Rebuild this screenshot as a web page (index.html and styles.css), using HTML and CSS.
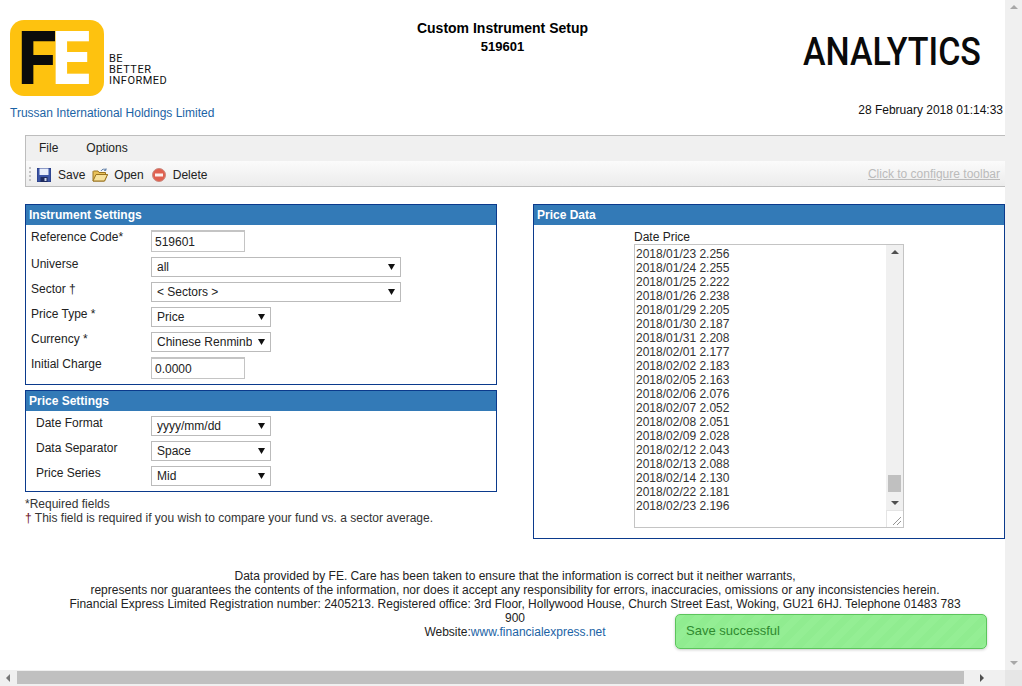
FILE: index.html
```html
<!DOCTYPE html>
<html lang="en">
<head>
<meta charset="utf-8">
<title>Custom Instrument Setup</title>
<link rel="stylesheet" href="styles.css">
</head>
<body>
<div class="window">
  <main class="page">
    <header class="header">
      <div class="brand">
        <div class="brand-row">
          <div class="logo"><span class="logo-f">F</span><span class="logo-e">E</span></div>
          <div class="tagline">BE<br>BETTER<br>INFORMED</div>
        </div>
        <a class="company">Trussan International Holdings Limited</a>
      </div>
      <div class="title">
        <h1>Custom Instrument Setup</h1>
        <h2>519601</h2>
      </div>
      <div class="right-head">
        <div class="analytics">ANALYTICS</div>
        <div class="date">28 February 2018 01:14:33</div>
      </div>
    </header>

    <section class="toolbox">
      <nav class="menu"><span>File</span><span>Options</span></nav>
      <div class="toolbar">
        <span class="grip"></span>
        <span class="tool">
          <svg class="icon" viewBox="0 0 14 14" width="14" height="14"><rect x="0" y="0" width="14" height="14" fill="#3b55a5"/><rect x="0" y="0" width="14" height="14" fill="none" stroke="#24377c"/><rect x="2.500" y="0.500" width="9" height="6.500" fill="#e8eefb"/><rect x="3.500" y="9" width="7" height="5" fill="#1d2a5e"/><rect x="7.500" y="10" width="2" height="3" fill="#cfd6e8"/></svg>
          Save</span>
        <span class="tool tool-open">
          <svg class="icon" viewBox="0 0 16 14" width="16" height="14"><path d="M1 3.500V13H12.500L15.500 6.500H13.500V4.500H7L6 3H1.500Z" fill="#e9c25a" stroke="#9a7420" stroke-width="1"/><path d="M1 13L4 6.500H15.500L12.500 13Z" fill="#f7e29c" stroke="#9a7420" stroke-width="1"/><path d="M9 3C10 1 12.500 .500 14 2M14 .300V2.300H12" fill="none" stroke="#5f7fa8" stroke-width="1"/></svg>
          Open</span>
        <span class="tool">
          <svg class="icon" viewBox="0 0 14 14" width="14" height="14"><circle cx="7" cy="7" r="6.500" fill="#e0604f" stroke="#c98a80"/><rect x="3" y="5.500" width="8" height="3" fill="#fdf0ee"/></svg>
          Delete</span>
        <a class="configure">Click to configure toolbar</a>
      </div>
    </section>

    <div class="columns">
      <div class="col">
        <section class="panel">
          <h3 class="panel-head">Instrument Settings</h3>
          <div class="panel-body">
            <div class="row"><label>Reference Code*</label><input class="input" value="519601"></div>
            <div class="row"><label>Universe</label><select class="select wide"><option>all</option></select></div>
            <div class="row"><label>Sector †</label><select class="select wide"><option>&lt; Sectors &gt;</option></select></div>
            <div class="row"><label>Price Type *</label><select class="select"><option>Price</option></select></div>
            <div class="row"><label>Currency *</label><select class="select"><option>Chinese Renminbi</option></select></div>
            <div class="row"><label>Initial Charge</label><input class="input" value="0.0000"></div>
          </div>
        </section>
        <section class="panel settings">
          <h3 class="panel-head">Price Settings</h3>
          <div class="panel-body indented">
            <div class="row"><label>Date Format</label><select class="select"><option>yyyy/mm/dd</option></select></div>
            <div class="row"><label>Data Separator</label><select class="select"><option>Space</option></select></div>
            <div class="row"><label>Price Series</label><select class="select"><option>Mid</option></select></div>
          </div>
        </section>
        <p class="notes">*Required fields<br><span class="dagger">†</span> This field is required if you wish to compare your fund vs. a sector average.</p>
      </div>
      <div class="col">
        <section class="panel">
          <h3 class="panel-head">Price Data</h3>
          <div class="data-body">
            <div class="data-label">Date Price</div>
            <div class="textarea">
              <div class="lines">2018/01/23 2.256<br>2018/01/24 2.255<br>2018/01/25 2.222<br>2018/01/26 2.238<br>2018/01/29 2.205<br>2018/01/30 2.187<br>2018/01/31 2.208<br>2018/02/01 2.177<br>2018/02/02 2.183<br>2018/02/05 2.163<br>2018/02/06 2.076<br>2018/02/07 2.052<br>2018/02/08 2.051<br>2018/02/09 2.028<br>2018/02/12 2.043<br>2018/02/13 2.088<br>2018/02/14 2.130<br>2018/02/22 2.181<br>2018/02/23 2.196</div>
              <div class="ta-side">
                <div class="ta-track">
                  <span class="arrow up dark"></span>
                  <span class="ta-thumb"></span>
                  <span class="arrow down dark"></span>
                </div>
                <div class="ta-grip"><svg viewBox="0 0 10 10" width="10" height="10"><path d="M1 9L9 1M5 9L9 5" stroke="#666" stroke-width="1" stroke-dasharray="1 .4" fill="none"/></svg></div>
              </div>
            </div>
          </div>
        </section>
      </div>
    </div>

    <footer class="footer">
      <div>Data provided by FE. Care has been taken to ensure that the information is correct but it neither warrants,</div>
      <div>represents nor guarantees the contents of the information, nor does it accept any responsibility for errors, inaccuracies, omissions or any inconsistencies herein.</div>
      <div>Financial Express Limited Registration number: 2405213. Registered office: 3rd Floor, Hollywood House, Church Street East, Woking, GU21 6HJ. Telephone 01483 783 900</div>
      <div>Website:<a class="link">www.financialexpress.net</a></div>
    </footer>

    <div class="toast">Save successful</div>
  </main>

  <aside class="vbar"><span class="arrow up faint"></span><span class="arrow down faint"></span></aside>
  <div class="hbar">
    <span class="arrow left"></span>
    <span class="hthumb"></span>
    <span class="arrow right"></span>
  </div>
  <div class="corner"></div>
</div>
</body>
</html>
```
FILE: styles.css
```css
* { box-sizing: border-box; }
html, body { margin: 0; padding: 0; height: 100%; overflow: hidden; }
body { font: 12px/14px "Liberation Sans", Arial, sans-serif; color: #222; background: #fff; }
h1, h2, h3, p { margin: 0; }

.window { display: grid; grid-template-columns: 1005px 17px; grid-template-rows: 670px 16px; width: 1022px; height: 686px; }
.page { position: relative; overflow: hidden; background: #fff; }

.header { display: grid; grid-template-columns: 1fr auto 1fr; height: 135px; }
.brand { padding: 20px 0 0 10px; }
.brand-row { display: flex; align-items: flex-end; height: 76px; }
.logo { position: relative; width: 94px; height: 76px; background: #fec20f; border-radius: 14px; flex: none; }
.logo-f, .logo-e { position: absolute; top: 12px; font: 800 73px/52px Inter, "Liberation Sans", sans-serif; transform-origin: left center; }
.logo-f { left: 8px; color: #0b0b0b; letter-spacing: -6px; transform: scaleX(.92); }
.logo-e { left: 42px; color: #fff; transform: scaleX(.9); }
.tagline { margin: 0 0 10px 5px; font: 400 11px/11px Roboto, sans-serif; letter-spacing: .5px; color: #111; }
.company { display: block; margin-top: 10px; color: #1b63a5; }
.title { padding-top: 20px; text-align: center; color: #000; }
.title h1 { font-size: 14px; line-height: 16px; font-weight: 700; }
.title h2 { margin-top: 3px; font-size: 13px; line-height: 15px; font-weight: 700; }
.right-head { text-align: right; padding-right: 2px; }
.analytics { margin: 31px 22px 0 0; font: 500 39px/42px Roboto, sans-serif; color: #0a0a0a; transform: scaleX(.872); transform-origin: right center; }
.date { margin-top: 30px; color: #111; }

.toolbox { margin-left: 25px; height: 52px; border: 1px solid #bdbdbd; border-right: 0; background: #f0f0f0; }
.menu { display: flex; gap: 28px; height: 25px; padding: 5px 0 0 13px; }
.toolbar { display: flex; align-items: center; height: 25px; padding: 0 5px 0 3px; background: linear-gradient(#fbfbfb, #ececec); }
.grip { width: 2px; height: 14px; margin-right: 6px; background: repeating-linear-gradient(#c4c4c4 0 2px, transparent 2px 4px); }
.tool { display: flex; align-items: center; gap: 7px; margin-right: 7px; padding-top: 2px; }
.tool-open { gap: 6px; margin-right: 8px; }
.icon { flex: none; }
.configure { margin-left: auto; color: #bbb; text-decoration: underline; }

.columns { display: flex; gap: 36px; margin: 17px 0 0 25px; }
.col { width: 472px; flex: none; }
.panel { border: 1px solid #0b3a8c; }
.panel.settings { margin-top: 5px; }
.panel-head { height: 20px; padding-left: 3px; background: #337ab7; color: #fff; font-size: 12px; line-height: 20px; font-weight: 700; }
.panel-body { display: flex; flex-direction: column; gap: 5px; padding: 5px 5px; }
.panel-body.indented { padding-left: 10px; }
.row { display: flex; align-items: flex-start; }
.row label { width: 120px; flex: none; }
.indented .row label { width: 115px; }
.input { width: 94px; height: 22px; padding: 0 3px; border: 1px solid #c4c4c4; border-top-width: 2px; font: 12px "Liberation Sans", Arial, sans-serif; color: #222; background: #fff; border-radius: 0; outline: 0; }
.select { appearance: none; -webkit-appearance: none; width: 120px; height: 20px; padding: 0 18px 0 5px; border: 1px solid #bbb; border-radius: 0; font: 12px "Liberation Sans", Arial, sans-serif; color: #222; background: #fff url("data:image/svg+xml,%3Csvg xmlns='http://www.w3.org/2000/svg' width='7' height='6'%3E%3Cpath d='M0 0H7L3.500 6Z' fill='%23111'/%3E%3C/svg%3E") no-repeat right 5px center; outline: 0; }
.select.wide { width: 250px; }
.notes { margin-top: 5px; color: #333; }
.dagger { color: #6a1020; }

.data-body { padding: 5px 0 0 100px; height: 313px; }
.data-label { height: 14px; }
.textarea { display: flex; width: 270px; height: 284px; border: 1px solid #c4c4c4; background: #fff; }
.lines { flex: 1; padding: 2px 1px; color: #333; overflow: hidden; }
.ta-side { display: flex; flex-direction: column; width: 17px; flex: none; }
.ta-track { position: relative; flex: 1; background: #f0f0f0; }
.ta-thumb { position: absolute; left: 2px; right: 2px; bottom: 18px; height: 17px; background: #c0c0c0; }
.ta-grip { display: flex; align-items: flex-end; justify-content: flex-end; height: 17px; border: 1px solid #e4e4e4; border-width: 1px 0 0 1px; background: #fff; padding: 0 1px 1px 0; }
.ta-grip svg { display: block; }

.arrow { position: absolute; width: 0; height: 0; border-style: solid; border-color: transparent; }
.arrow.up { top: 5px; left: 50%; margin-left: -4px; border-width: 0 4px 4px; border-bottom-color: #505050; }
.arrow.down { bottom: 5px; left: 50%; margin-left: -4px; border-width: 4px 4px 0; border-top-color: #505050; }
.arrow.faint.up { border-bottom-color: #a8a8a8; }
.arrow.faint.down { border-top-color: #a8a8a8; }
.arrow.left { top: 4px; left: 6px; border-width: 4px 4px 4px 0; border-right-color: #777; }
.arrow.right { top: 4px; right: 21px; border-width: 4px 0 4px 4px; border-left-color: #505050; }

.footer { position: absolute; top: 569px; left: 65px; width: 900px; text-align: center; color: #222; }
.link { color: #1b63a5; }

.toast { position: absolute; left: 675px; top: 614px; width: 312px; height: 35px; padding: 9px 10px; border: 1px solid #5cc45c; border-radius: 5px; font-size: 13px; color: #2f8a2f; background: repeating-linear-gradient(135deg, #94ee94 0 7px, #90ec90 7px 14px); box-shadow: 0 1px 3px rgba(0,0,0,.2); }

.vbar { position: relative; background: #f0f0f0; }
.hbar { position: relative; background: #f0f0f0; padding: 1px 41px 2px 17px; grid-column: 1; grid-row: 2; }
.hthumb { display: block; height: 13px; background: #c0c0c0; }
.corner { background: #e6e6e6; }
```
